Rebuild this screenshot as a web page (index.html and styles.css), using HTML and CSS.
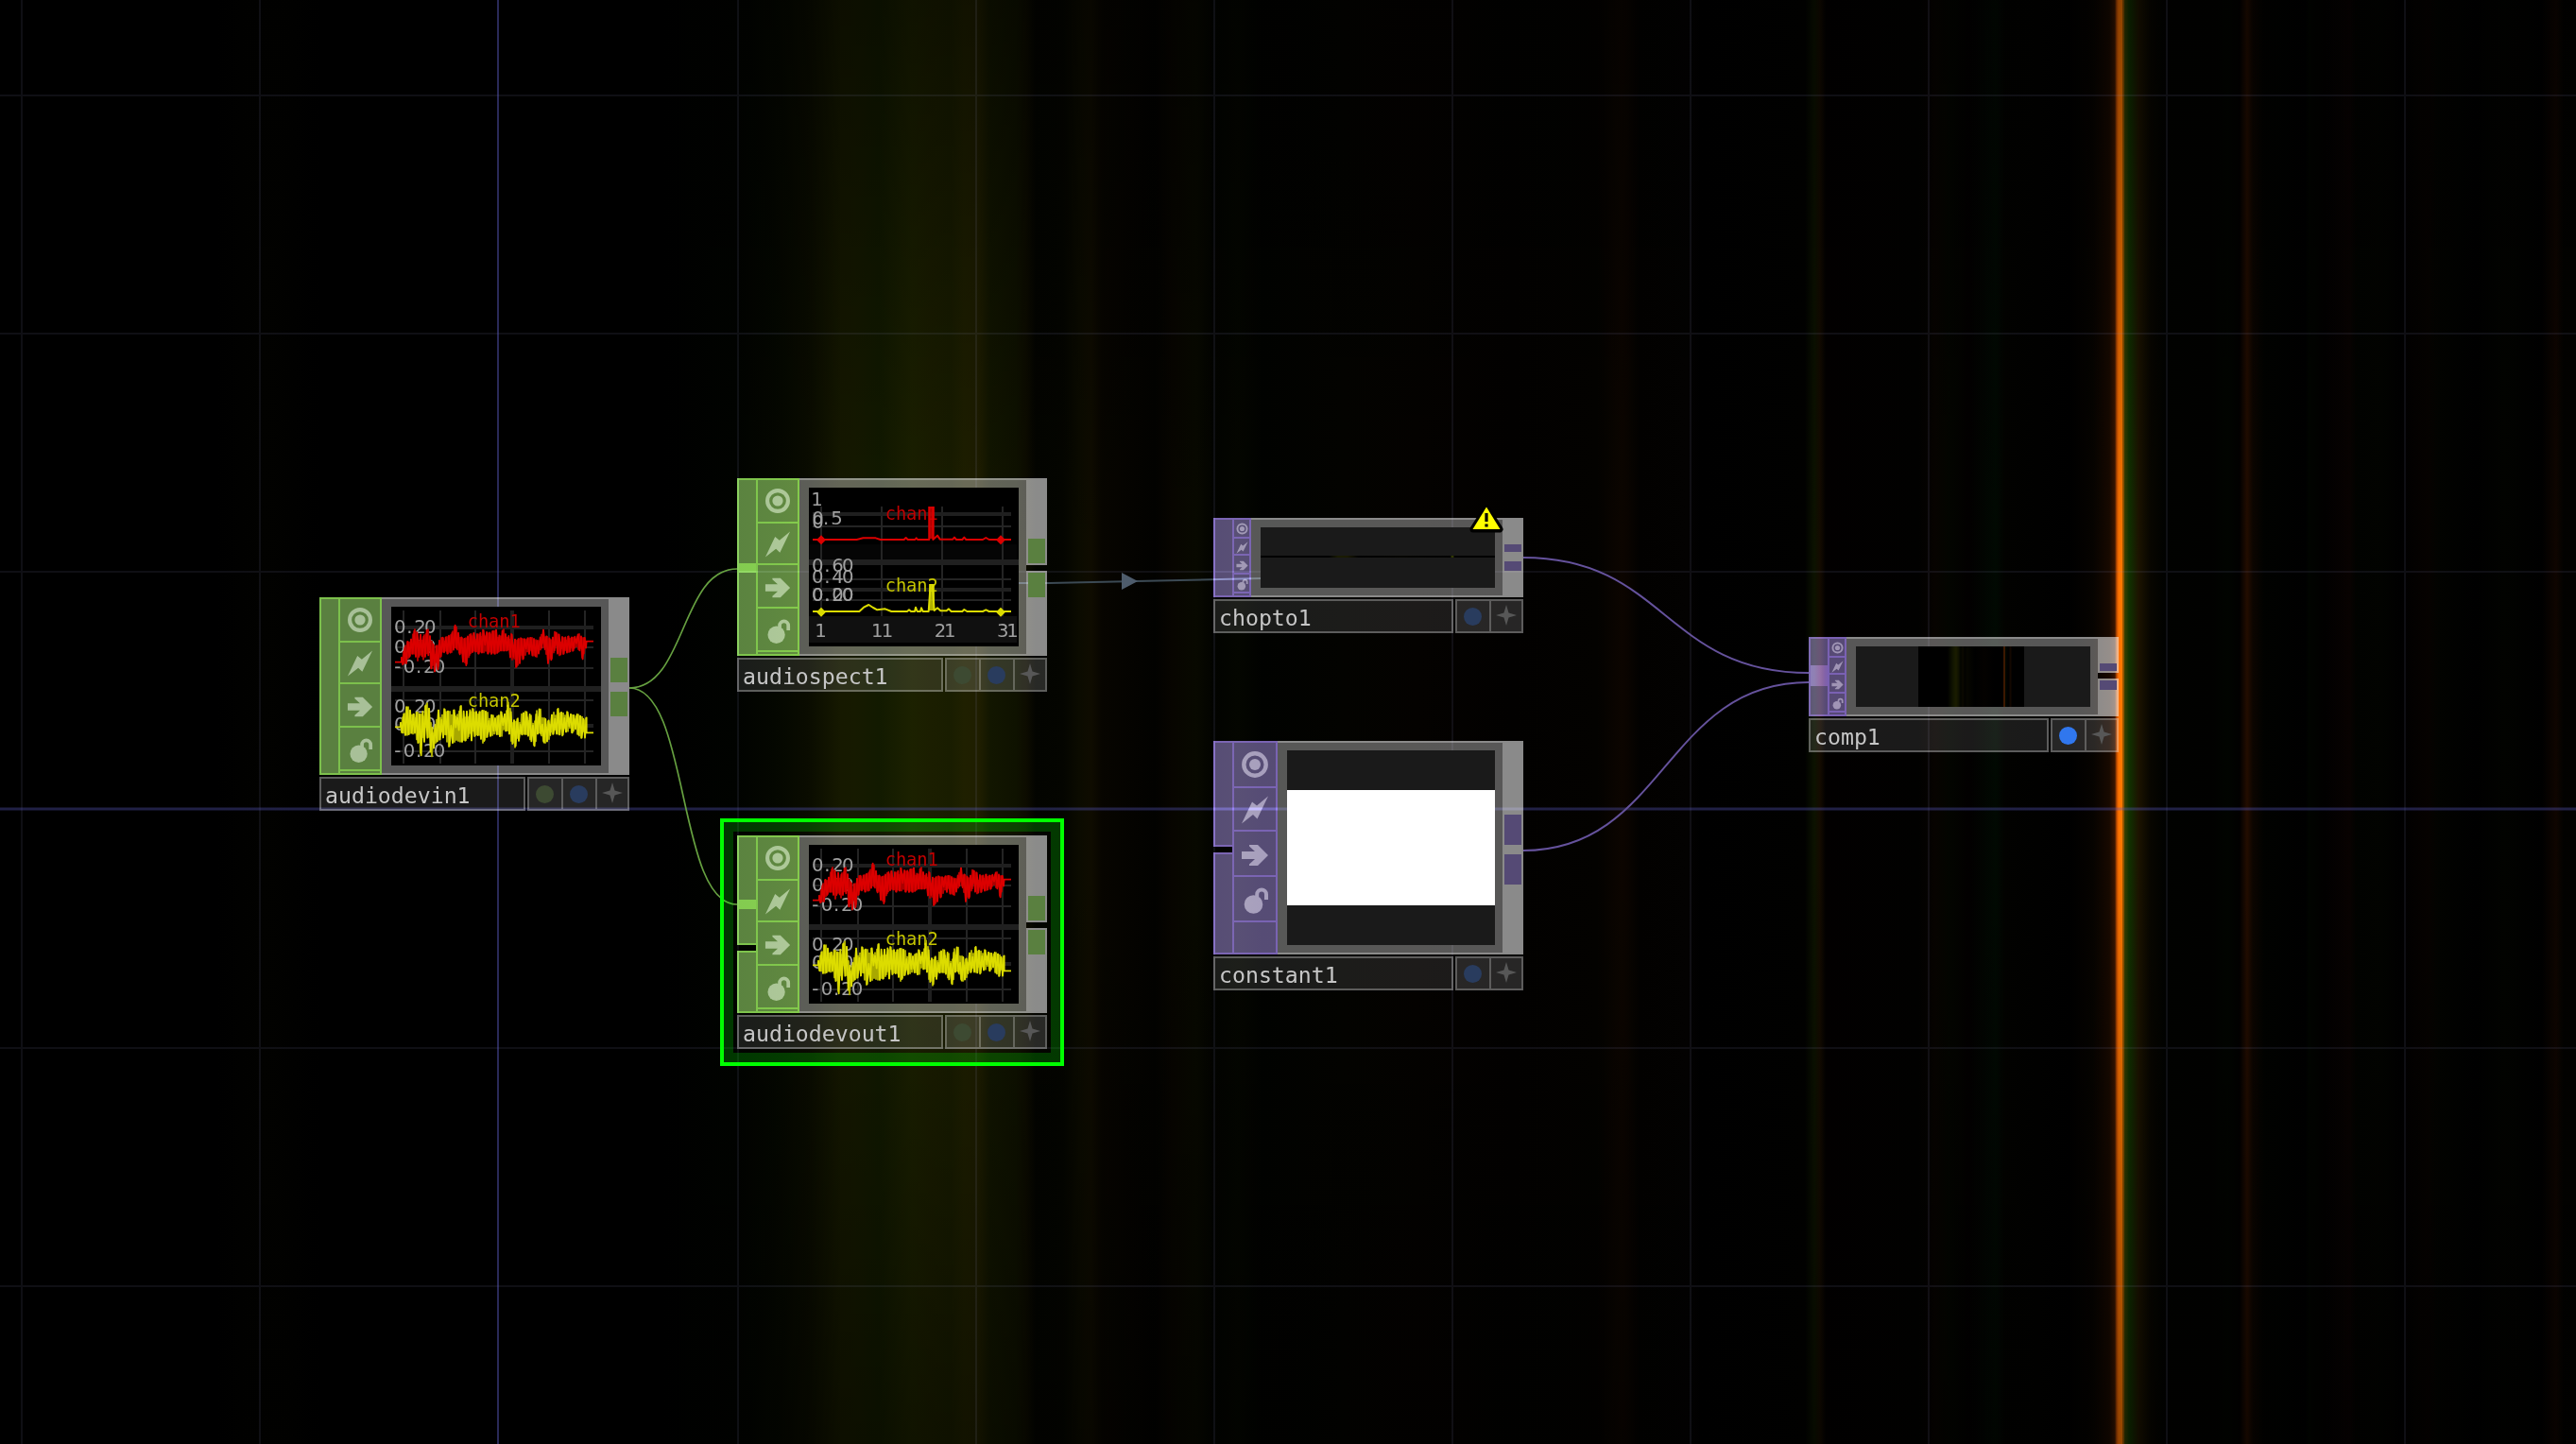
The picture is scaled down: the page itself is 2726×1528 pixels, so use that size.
FILE: index.html
```html
<!DOCTYPE html>
<html lang="en">
<head>
<meta charset="utf-8">
<title>Network editor</title>
<link rel="stylesheet" href="styles.css">
</head>
<body>
<svg class="defs" aria-hidden="true">
  <symbol id="i-view" viewBox="-15 -15 30 30"><circle r="11.7" fill="none" stroke="currentColor" stroke-width="4.4"/><circle r="6" fill="currentColor"/></symbol>
  <symbol id="i-bolt" viewBox="-15 -15 30 30"><path fill="currentColor" d="M14-14.5 2.5 9.5-2 5-14 14.5-3-8.5 2-4.5z"/></symbol>
  <symbol id="i-arrow" viewBox="-15 -15 30 30"><path fill="currentColor" d="M-14-4H0L-6-9.5V-11H3L14 0 3 11H-6V9.5L0 4H-14z"/></symbol>
  <symbol id="i-lock" viewBox="-15 -15 30 30"><circle cx="-1.5" cy="4" r="9.8" fill="currentColor"/><path fill="none" stroke="currentColor" stroke-width="4" d="M2.2-3V-6.5a4.9 4.9 0 0 1 9.8 0V-1"/></symbol>
  <symbol id="i-star" viewBox="-11 -11 22 22"><path fill="currentColor" d="M0-11 2.5-2.5 11 0 2.5 2.5 0 11-2.5 2.5-11 0-2.5-2.5z"/></symbol>
  <symbol id="scope" viewBox="252 66 666 504">
    <g class="grid">
      <path d="M291 78V564M408 78V564M519 78V564M753 78V564M867 78V564M264 195H894M264 261H894M264 363H894M264 525H894"/>
      <path class="wide" d="M636 78V564M264 132H894M264 444H894"/>
      <path class="split" d="M252 327H918"/>
    </g>
    <g class="num">
      <text y="150" x="261 301 325 357">0.20</text>
      <text y="213" x="261 301 325 357">0.00</text>
      <text y="275" x="262 290 330 354 386">-0.20</text>
      <text y="402" x="261 301 325 357">0.20</text>
      <text y="459" x="261 301 325 357">0.00</text>
      <text y="543" x="262 290 330 354 386">-0.20</text>
    </g>
    <text class="chan red" x="494" y="132">chan1</text>
    <text class="chan yellow" x="494" y="384">chan2</text>
    <g id="wave1" class="wave red"></g>
    <g id="wave2" class="wave yellow"></g>
  </symbol>
</svg>

<main class="network">
  <div class="backdrop"></div>
  <svg class="wires" viewBox="0 0 2726 1528">
    <g class="gridlines">
      <path d="M23 0V1528M275 0V1528M781 0V1528M1033 0V1528M1285 0V1528M1537 0V1528M1789 0V1528M2041 0V1528M2293 0V1528M2545 0V1528M0 101H2726M0 353H2726M0 605H2726M0 1109H2726M0 1361H2726"/>
      <path class="axis" d="M527 0V1528"/>
      <path class="axis horizontal" d="M0 856H2726"/>
    </g>
    <g class="chop">
      <path d="M666 728C726 728 720 602 780 602"/>
      <path d="M666 728C730 728 716 957 780 957"/>
    </g>
    <g class="ref"><path d="M1078 617H1110L1334 612"/><path class="head" d="M1187 606 1204 615 1187 624z"/></g>
    <g class="top">
      <path d="M1612 590C1762 590 1762 712 1914 712"/>
      <path d="M1612 900C1762 900 1762 722 1914 722"/>
    </g>
  </svg>

  <section class="node chop-node" style="left:338px;top:632px">
    <div class="body">
      <div class="inputs"><i class="in"></i></div>
      <div class="flags"><b><svg><use href="#i-view"/></svg></b><b><svg><use href="#i-bolt"/></svg></b><b><svg><use href="#i-arrow"/></svg></b><b><svg><use href="#i-lock"/></svg></b></div>
      <div class="viewer"><svg class="graph"><use href="#scope"/></svg></div>
      <div class="outputs solid"><i></i><i></i></div>
    </div>
    <div class="label"><span class="name">audiodevin1</span><span class="toggles"><b><i class="dot green"></i></b><b><i class="dot blue"></i></b><b><svg><use href="#i-star"/></svg></b></span></div>
  </section>

  <section class="node chop-node" style="left:780px;top:506px">
    <div class="body">
      <div class="inputs"><i class="in"><u class="plug spect"></u></i></div>
      <div class="flags"><b><svg><use href="#i-view"/></svg></b><b><svg><use href="#i-bolt"/></svg></b><b><svg><use href="#i-arrow"/></svg></b><b><svg><use href="#i-lock"/></svg></b></div>
      <div class="viewer">
        <svg class="graph" viewBox="288 78 666 504">
          <path fill="#050505" d="M288 258H948V306H288z"/>
          <path fill="#101010" d="M288 486H948V570H288z"/>
          <g class="grid">
            <path d="M327 138V486M519 138V486M711 138V486M903 138V486M300 201H930M300 369H930M300 435H930"/>
            <path class="wide" d="M300 162H930M300 402H930"/>
            <path class="split" d="M288 315H954"/>
          </g>
          <g class="num">
            <text y="136" x="295">1</text>
            <text y="195" x="298 333 358">0.5</text>
            <text y="208" x="298">0</text>
            <text y="345" x="297 337 361 393">0.60</text>
            <text y="382" x="297 337 361 393">0.40</text>
            <text y="437" x="297 337 361 393">0.20</text>
            <text y="437" x="297 337 361 393">0.00</text>
            <text y="552" x="307">1</text>
            <text y="552" x="486 518">11</text>
            <text y="552" x="686 717">21</text>
            <text y="552" x="885 916">31</text>
          </g>
          <text class="chan red" x="530" y="180">chan1</text>
          <text class="chan yellow" x="530" y="408">chan2</text>
          <g class="trace red">
            <path d="M300 243H440L460 238H500L515 243H590L596 237 602 243H625L629 238 633 243H670V138M682 138V243L696 230 704 242H745L750 236 756 243H775L781 236 787 243H840L850 237 860 243H930"/>
            <path class="spike" d="M677 138V240"/>
            <path class="end" d="M327 229 342 244 327 259 312 244zM897 229 912 244 897 259 882 244z"/>
          </g>
          <g class="trace yellow">
            <path d="M300 471H448L462 458 478 450 492 459 505 466 530 463 550 471H600L606 466 612 471H624L627 458 632 471H642L645 460 650 471H668L674 384M680 384 686 468 696 460 706 469H725L732 463 740 471H775L781 465 790 471H840L850 466 860 471H930"/>
            <path class="spike" d="M678 384V468"/>
            <path class="end" d="M327 458 342 473 327 488 312 473zM897 458 912 473 897 488 882 473z"/>
          </g>
        </svg>
      </div>
      <div class="outputs"><i></i><i></i></div>
    </div>
    <div class="label"><span class="name">audiospect1</span><span class="toggles"><b><i class="dot green"></i></b><b><i class="dot blue"></i></b><b><svg><use href="#i-star"/></svg></b></span></div>
  </section>

  <section class="node chop-node selected" style="left:780px;top:884px">
    <div class="body">
      <div class="inputs"><i class="in first"><u class="plug devout"></u></i><i class="in"></i></div>
      <div class="flags"><b><svg><use href="#i-view"/></svg></b><b><svg><use href="#i-bolt"/></svg></b><b><svg><use href="#i-arrow"/></svg></b><b><svg><use href="#i-lock"/></svg></b></div>
      <div class="viewer"><svg class="graph"><use href="#scope"/></svg></div>
      <div class="outputs"><i></i><i></i></div>
    </div>
    <div class="label"><span class="name">audiodevout1</span><span class="toggles"><b><i class="dot green"></i></b><b><i class="dot blue"></i></b><b><svg><use href="#i-star"/></svg></b></span></div>
  </section>

  <section class="node top-node compact" style="left:1284px;top:548px">
    <div class="body">
      <div class="inputs"><i class="in"></i></div>
      <div class="flags"><b><svg><use href="#i-view"/></svg></b><b><svg><use href="#i-bolt"/></svg></b><b><svg><use href="#i-arrow"/></svg></b><b><svg><use href="#i-lock"/></svg></b></div>
      <div class="viewer"><div class="image"><div class="strip"></div></div></div>
      <div class="outputs solid"><i></i><i></i></div>
    </div>
    <div class="label"><span class="name">chopto1</span><span class="toggles"><b><i class="dot blue"></i></b><b><svg><use href="#i-star"/></svg></b></span></div>
    <svg class="warning" viewBox="0 0 36 30"><path d="M18 4 32 26H4z" fill="#ff0" stroke="#000" stroke-width="7" stroke-linejoin="round"/><path d="M18 2.5 32.5 26H3.5z" fill="#ff0"/><path d="M18 9V18M18 20.5V23.5" stroke="#000" stroke-width="3.2"/></svg>
  </section>

  <section class="node top-node large" style="left:1284px;top:784px">
    <div class="body">
      <div class="inputs"><i class="in first"></i><i class="in"></i></div>
      <div class="flags"><b><svg><use href="#i-view"/></svg></b><b><svg><use href="#i-bolt"/></svg></b><b><svg><use href="#i-arrow"/></svg></b><b><svg><use href="#i-lock"/></svg></b></div>
      <div class="viewer"><div class="image"><div class="white"></div></div></div>
      <div class="outputs solid"><i></i><i></i></div>
    </div>
    <div class="label"><span class="name">constant1</span><span class="toggles"><b><i class="dot blue"></i></b><b><svg><use href="#i-star"/></svg></b></span></div>
  </section>

  <section class="node top-node compact" style="left:1914px;top:674px">
    <div class="body">
      <div class="inputs"><i class="in"><u class="plug comp"></u></i></div>
      <div class="flags"><b><svg><use href="#i-view"/></svg></b><b><svg><use href="#i-bolt"/></svg></b><b><svg><use href="#i-arrow"/></svg></b><b><svg><use href="#i-lock"/></svg></b></div>
      <div class="viewer"><div class="image"><div class="bars"></div></div></div>
      <div class="outputs"><i></i><i></i></div>
    </div>
    <div class="label"><span class="name">comp1</span><span class="toggles"><b><i class="dot active"></i></b><b><svg><use href="#i-star"/></svg></b></span></div>
  </section>
</main>
<script src="waves.js"></script>
</body>
</html>
```
FILE: styles.css
```css
* { box-sizing: border-box; }
body { margin: 0; background: #000; overflow: hidden; }
i, b, u { display: block; font-style: normal; text-decoration: none; }
.defs { position: absolute; width: 0; height: 0; }

.network { position: relative; width: 2726px; height: 1528px; overflow: hidden; background: #000; }
.backdrop {
  position: absolute; inset: 0;
  background: linear-gradient(90deg,
    #000 0, #000 230px, #020200 280px, #000 340px, #000 700px, #010300 780px, #040700 820px, #0a0c00 855px, #161900 890px, #161a00 905px,
    #121a00 930px, #1c2100 965px, #1b1e00 985px, #191d00 1005px, #1f2000 1020px, #1f1e00 1036px,
    #121600 1048px, #0f1200 1075px, #0d0c00 1086px, #030400 1096px, #040500 1125px, #0b0b00 1142px,
    #0f0c00 1155px, #070500 1166px, #040300 1200px, #020200 1222px, #070500 1240px, #080900 1266px,
    #020300 1285px, #040600 1310px, #010200 1335px, #030300 1420px, #040200 1500px, #020100 1600px,
    #030200 1690px, #0c0500 1716px, #0a0400 1722px, #020100 1735px, #030201 1785px, #000 1800px, #010100 1910px,
    #0c1300 1920px, #140b00 1926px, #020000 1932px, #010100 2030px, #070300 2048px, #030500 2062px, #020000 2084px,
    #010902 2112px, #020200 2122px, #000 2190px, #060300 2215px, #180900 2232px, #3a1600 2238px, #c24d00 2240px,
    #ff7300 2242px, #ff7a00 2246px, #9c5600 2246px, #8a5400 2248px, #3a4000 2248px, #103200 2253px, #1c1400 2263px,
    #080600 2275px, #010200 2290px, #010100 2340px, #010400 2358px, #010000 2370px, #240d00 2378px, #0c0500 2384px,
    #010200 2396px, #000 2440px, #010400 2443px, #010000 2460px, #080201 2487px, #010200 2493px, #020300 2520px,
    #000 2540px, #060200 2570px, #020300 2580px, #000 2620px, #020300 2650px, #000 2690px, #0f0500 2705px, #020200 2713px, #030200 2726px);
}
.backdrop::after {
  content: ""; position: absolute; inset: 0;
  background: linear-gradient(rgba(0,0,0,.44), rgba(0,0,0,.2) 330px, transparent 620px, transparent 880px, rgba(0,0,0,.2) 1200px, rgba(0,0,0,.42));
}
.wires { position: absolute; inset: 0; width: 2726px; height: 1528px; fill: none; }
.gridlines path { stroke: rgba(150,150,200,.1); stroke-width: 2; }
.gridlines .axis { stroke: rgba(100,100,210,.42); }
.gridlines .horizontal { stroke: rgba(90,90,190,.36); stroke-width: 3; }
.chop { stroke: #66a040; stroke-width: 1.7; }
.ref { stroke: #3c4a54; stroke-width: 2; }
.ref .head { fill: #4e5c6c; stroke: none; }
.top { stroke: #65529c; stroke-width: 1.9; }

.node { position: absolute; display: flex; flex-direction: column; gap: 2px; width: 328px; --h: 188px; --split: 92px; --plug: 26px; --plug2: 26px; --flags: 46px; --icon: 28px; }
.compact { --h: 84px; --split: 38px; --plug: 8px; --plug2: 10px; --flags: 20px; --icon: 13px; }
.large { --h: 226px; --split: 112px; --plug: 32px; --plug2: 32px; --flags: 48px; --icon: 30px; }
.chop-node { --fill: #5a8040; --line: #7cc04c; --glyph: #a8c098; }
.top-node { --fill: #554a75; --line: #7861b3; --glyph: #a69dbd; }
.body { display: flex; height: var(--h); }
.inputs { width: 20px; display: flex; flex-direction: column; gap: 6px; }
.in { flex: 1; border: 2px solid var(--line); border-right: 0; background: var(--fill); mix-blend-mode: plus-lighter; }
.first { flex: 0 0 116px; }
.large .first { flex-basis: 112px; }
.plug { background: #82c850; height: 10px; }
.plug.spect { margin-top: 88px; }
.plug.devout { margin-top: 66px; }
.plug.comp { height: 22px; margin-top: 28px; background: linear-gradient(90deg, #8674ba, #8062a4 70%, #7c60ae); }
.flags { width: var(--flags); border: 2px solid var(--line); background: var(--fill); display: grid; grid-template-rows: 46px 44px 46px 46px 1fr; mix-blend-mode: plus-lighter; color: var(--glyph); }
.compact .flags { grid-template-rows: 20px 18px 20px 20px 1fr; }
.large .flags { grid-template-rows: 48px 46px 48px 48px 1fr; }
.flags b { border-bottom: 2px solid var(--line); display: flex; align-items: center; justify-content: center; min-height: 0; }
.flags svg { width: var(--icon); height: var(--icon); flex: none; }
.flags b:nth-child(2) svg { position: relative; top: 1px; }
.flags b:nth-child(n+3) svg { position: relative; top: 2px; }
.compact .flags svg { opacity: .9; }
.compact .flags b:nth-child(n) svg { top: 1px; }
.viewer { flex: 1; display: flex; padding: 8px 8px 8px 10px; background: rgba(255,255,255,.34); background-clip: padding-box; border: solid rgba(255,255,255,.54); border-width: 2px 0; }
.outputs { width: 22px; display: flex; flex-direction: column; gap: 6px; }
.outputs > i { background: rgba(255,255,255,.54); flex: 1; display: flex; flex-direction: column; padding: 2px; }
.outputs > i:first-child { flex: 0 0 var(--split); justify-content: flex-end; }
.outputs > i::before { content: ""; height: var(--plug); background: var(--fill); }
.outputs > i:last-child::before { height: var(--plug2); }
.outputs.solid { gap: 0; }
.outputs.solid > i:first-child { border-bottom: 6px solid transparent; flex-basis: calc(var(--split) + 6px); }

.graph { display: block; width: 222px; height: 168px; background: #000; }
.image { flex: 1; background: #1a1a1a; display: flex; justify-content: center; align-items: center; }
.strip { width: 100%; height: 2px; margin-bottom: 2px; background: linear-gradient(90deg, #000 29%, #1a1c00 33%, #1a1a00 37%, #000 42%, #050500 60%, #000 81%, #303800 81.5%, #303800 82.4%, #000 82.5%); }
.white { width: 100%; height: 122px; background: #fff; }
.bars { width: 112px; height: 64px; margin-right: 4px; margin-left: 0; background: linear-gradient(90deg, #000 31px, #121600 37px, #1a1c00 40px, #0e1000 43px, #020300 45px, #0c0a00 47px, #020200 49px, #060600 52px, #000 60px, #040200 70px, #000 80px, #000 90px, #3c1800 90px, #3c1800 92px, #020800 92px, #000 95px, #000 96px, #120700 97px, #120700 98px, #000 99px); }

.grid { fill: none; stroke: #242424; stroke-width: 6; }
.grid .wide { stroke: #1f1f1f; stroke-width: 12; }
.grid .split { stroke: #202020; stroke-width: 18; }
.num { font: 59px "DejaVu Sans", sans-serif; fill: #a0a0a0; }
.chan { font: 56px "DejaVu Sans Mono", monospace; }
.chan.red { fill: #c00000; }
.chan.yellow { fill: #c4c400; }
.wave, .trace { fill: none; stroke-linejoin: round; }
.wave.red { --lit: #dc0000; --dim: #aa0000; }
.wave.yellow { --lit: #dcdc00; --dim: #a8a800; }
.wave path { stroke: var(--lit); stroke-width: 5.5; }
.wave .dim { stroke: var(--dim); stroke-width: 6; }
.trace path { stroke-width: 6; }
.trace .spike { stroke-width: 18; opacity: .8; }
.trace.red { stroke: #dc0000; }
.trace.yellow { stroke: #dcdc00; }
.trace .end { stroke: none; }
.trace.red .end { fill: #dc0000; }
.trace.yellow .end { fill: #dcdc00; }

.label { display: flex; gap: 2px; height: 36px; }
.name { flex: 1; border: 2px solid rgba(255,255,255,.36); background: rgba(255,255,255,.1); background-clip: padding-box; padding-left: 4px; font: 23.2px/36px "DejaVu Sans Mono", monospace; color: #c6c6c6; white-space: nowrap; }
.toggles { display: flex; border: solid rgba(255,255,255,.36); border-width: 2px 0 2px 2px; }
.toggles b { width: 36px; border-right: 2px solid rgba(255,255,255,.36); background: rgba(255,255,255,.15); background-clip: padding-box; display: flex; align-items: center; justify-content: center; color: #575757; }
.toggles b:last-child { width: 34px; }
.toggles svg { width: 22px; height: 22px; margin-bottom: 2px; }
.dot { width: 19px; height: 19px; border-radius: 50%; margin: 1px 2px 0 0; }
.dot.green { background: #3d4a32; }
.dot.blue { background: #293c5e; }
.dot.active { background: #3077ee; }

.selected::before { content: ""; position: absolute; inset: -18px; border: 4px solid #0f0; }
.selected::after { content: ""; position: absolute; inset: -14px; border: 10px solid rgba(0,255,0,.21); pointer-events: none; }
.warning { position: absolute; left: 271px; top: -14px; width: 36px; height: 30px; overflow: visible; }
```
FILE: waves.js
```js
// Envelopes as [x, top, bottom] in scope units.
const CHAN1 = [[285,228,250],[300,180,245],[315,170,215],[327,138,215],[335,150,240],[345,155,210],[355,160,235],[368,135,210],[378,170,260],[388,190,272],[400,190,265],[408,165,225],[430,162,215],[445,150,210],[456,122,195],[465,150,205],[480,170,240],[490,165,252],[500,155,220],[515,150,205],[530,155,215],[543,140,210],[560,150,215],[572,145,215],[585,140,215],[597,160,205],[608,135,205],[620,165,205],[632,150,230],[648,175,258],[660,165,245],[672,170,230],[690,165,215],[700,165,220],[715,175,225],[727,160,200],[737,135,190],[745,160,220],[752,165,255],[762,175,230],[770,145,205],[785,155,220],[800,165,215],[815,160,210],[830,165,205],[848,152,200],[860,165,232],[872,165,190]];
const CHAN2 = [[282,435,462],[300,385,475],[308,385,470],[318,410,465],[335,400,490],[347,410,538],[358,385,490],[369,368,480],[380,450,545],[390,450,500],[402,395,490],[418,390,480],[435,400,510],[450,395,495],[475,380,495],[490,400,490],[508,388,490],[522,400,470],[535,400,480],[543,395,498],[555,400,480],[570,410,475],[590,415,470],[600,400,480],[615,410,460],[625,365,460],[632,400,490],[643,430,515],[655,420,495],[668,405,470],[680,398,470],[695,410,490],[708,430,510],[715,392,470],[725,390,465],[738,420,500],[750,430,490],[765,405,470],[782,390,470],[795,405,475],[810,400,460],[825,410,465],[845,408,470],[855,415,482],[872,418,482]];

function at(env, x) {
  let k = 1;
  while (k < env.length - 1 && env[k][0] < x) k++;
  const [a, b] = [env[k - 1], env[k]];
  const t = Math.min(1, Math.max(0, (x - a[0]) / (b[0] - a[0])));
  return [a[1] + (b[1] - a[1]) * t, a[2] + (b[2] - a[2]) * t];
}

// Points of the envelope itself are always reached; those between fall short at random.
function zigzag(env, step, spread, seed, head, tail) {
  let s = seed, up = true;
  const rnd = () => (s = (s * 16807) % 2147483647) / 2147483647;
  let d = head;
  for (let x = env[0][0]; x <= env[env.length - 1][0]; x += step) {
    const [t, b] = at(env, x);
    const near = env.some(p => Math.abs(p[0] - x) <= step);
    const cut = near ? 0 : (b - t) * spread * rnd();
    d += `L${x} ${(up ? t + cut : b - cut).toFixed(0)}`;
    up = !up;
  }
  return d + tail;
}

function draw(id, env, y0, y1) {
  const dim = zigzag(env, 3, 0.35, 77, `M${env[0][0]} ${y0}`, "");
  const lit = zigzag(env, 5, 0.45, 991, `M264 ${y0}H${env[0][0]}`, `L872 ${y1}H894`);
  document.getElementById(id).innerHTML = `<path class="dim" d="${dim}"/><path d="${lit}"/>`;
}

draw("wave1", CHAN1, 242, 176);
draw("wave2", CHAN2, 448, 466);
```
